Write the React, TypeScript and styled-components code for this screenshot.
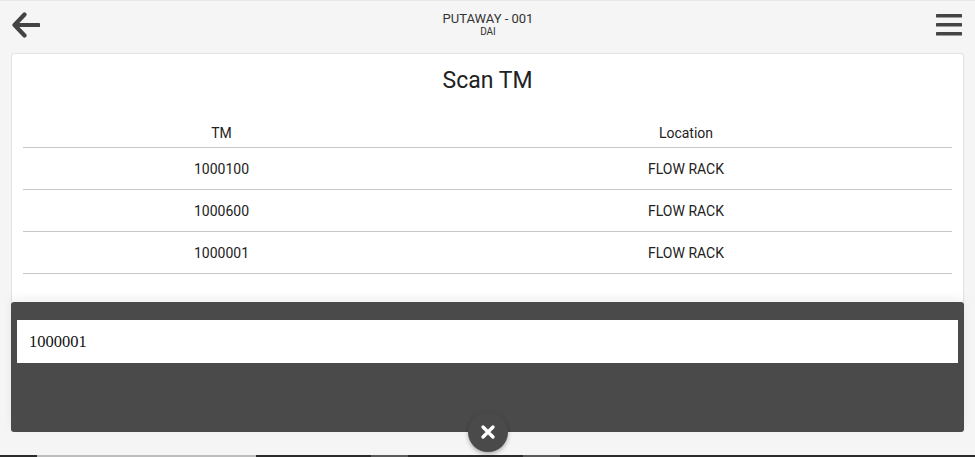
import React from "react";
import styled, { createGlobalStyle } from "styled-components";

const Global = createGlobalStyle`
  html, body { margin: 0; padding: 0; background: #f5f5f5; }
  body { font-family: Roboto, "Liberation Sans", Arial, sans-serif; color: #222; }
  * { box-sizing: border-box; }
`;

const Page = styled.div`
  width: 975px;
  height: 457px;
  display: flex;
  flex-direction: column;
  background: #f5f5f5;
  border-top: 1px solid #e6e6e6;
  overflow: hidden;
`;

const Header = styled.header`
  height: 52px;
  display: flex;
  align-items: flex-start;
  justify-content: space-between;
  padding: 0 13px 0 12px;
`;

const IconButton = styled.button<{ $top: number }>`
  border: none;
  background: transparent;
  padding: 0;
  margin-top: ${(p) => p.$top}px;
  display: flex;
  cursor: pointer;
`;

const TitleBlock = styled.div`
  display: flex;
  flex-direction: column;
  align-items: center;
  padding-top: 10px;
  color: #333;
`;

const Title = styled.div`
  font-size: 13px;
  line-height: 15px;
`;

const Subtitle = styled.div`
  font-size: 10px;
  line-height: 12px;
`;

const Main = styled.div`
  padding: 0 11px;
  display: flex;
  flex-direction: column;
`;

const Card = styled.section`
  height: 249px;
  background: #fff;
  border: 1px solid #e2e2e2;
  border-bottom: none;
  border-radius: 3px 3px 0 0;
  padding: 5px 11px 0;
`;

const CardTitle = styled.h1`
  margin: 0;
  font-size: 23px;
  font-weight: 400;
  line-height: 44px;
  text-align: center;
  color: #222;
`;

const Table = styled.div`
  margin-top: 14px;
  display: grid;
  grid-template-columns: 397px 1fr;
`;

const Cell = styled.div<{ $head?: boolean }>`
  height: ${(p) => (p.$head ? 31 : 42)}px;
  display: flex;
  align-items: center;
  justify-content: center;
  font-size: 14px;
  color: #222;
  border-bottom: 1px solid #c8c8c8;
  padding-top: ${(p) => (p.$head ? 2 : 1)}px;
`;

const Panel = styled.div`
  position: relative;
  height: 130px;
  background: #4a4a4a;
  border-radius: 3px;
  padding: 18px 6px 0;
  box-shadow: 0 -4px 10px rgba(0, 0, 0, 0.06);
`;

const Input = styled.input`
  width: 100%;
  height: 43px;
  border: none;
  outline: none;
  background: #fff;
  padding: 1px 12px 0;
  font-family: "Liberation Serif", "Times New Roman", serif;
  font-size: 16.5px;
  color: #111;
`;

const CloseButton = styled.button`
  position: absolute;
  left: 50%;
  bottom: -20px;
  transform: translateX(-50%);
  width: 40px;
  height: 40px;
  border-radius: 50%;
  border: none;
  background: #4a4a4a;
  box-shadow: 0 2px 4px rgba(0, 0, 0, 0.3);
  display: flex;
  align-items: center;
  justify-content: center;
  padding: 0;
  cursor: pointer;
`;

const Strip = styled.div`
  margin-top: auto;
  height: 2px;
  display: flex;
`;

const StripSeg = styled.div<{ $w: number; $c: string }>`
  width: ${(p) => p.$w}px;
  background: ${(p) => p.$c};
`;

const rows = [
  { tm: "1000100", loc: "FLOW RACK" },
  { tm: "1000600", loc: "FLOW RACK" },
  { tm: "1000001", loc: "FLOW RACK" },
];

const strip = [
  { w: 37, c: "#2a2a2a" },
  { w: 219, c: "#bdbdbd" },
  { w: 115, c: "#2a2a2a" },
  { w: 37, c: "#5a5a5a" },
  { w: 115, c: "#2a2a2a" },
  { w: 37, c: "#5a5a5a" },
  { w: 415, c: "#2a2a2a" },
];

export default function App() {
  return (
    <>
      <Global />
      <Page>
        <Header>
          <IconButton $top={11} aria-label="Back">
            <svg width="28" height="26" viewBox="0 0 28 26">
              <path
                d="M12.5 2.5 L2.5 13 L12.5 23.5 M2.5 13 L26.5 13"
                fill="none"
                stroke="#444"
                strokeWidth="4.2"
                strokeLinecap="round"
                strokeLinejoin="round"
              />
            </svg>
          </IconButton>
          <TitleBlock>
            <Title>PUTAWAY - 001</Title>
            <Subtitle>DAI</Subtitle>
          </TitleBlock>
          <IconButton $top={12} aria-label="Menu">
            <svg width="26" height="23" viewBox="0 0 26 23">
              <rect x="0" y="1" width="26" height="3.6" rx="0.6" fill="#444" />
              <rect x="0" y="10" width="26" height="3.6" rx="0.6" fill="#444" />
              <rect x="0" y="19" width="26" height="3.6" rx="0.6" fill="#444" />
            </svg>
          </IconButton>
        </Header>
        <Main>
          <Card>
            <CardTitle>Scan TM</CardTitle>
            <Table>
              <Cell $head>TM</Cell>
              <Cell $head>Location</Cell>
              {rows.map((r) => (
                <React.Fragment key={r.tm}>
                  <Cell>{r.tm}</Cell>
                  <Cell>{r.loc}</Cell>
                </React.Fragment>
              ))}
            </Table>
          </Card>
          <Panel>
            <Input defaultValue="1000001" />
            <CloseButton aria-label="Close">
              <svg width="16" height="16" viewBox="0 0 16 16">
                <path
                  d="M3 3 L13 13 M13 3 L3 13"
                  stroke="#fff"
                  strokeWidth="3.4"
                  strokeLinecap="round"
                />
              </svg>
            </CloseButton>
          </Panel>
        </Main>
        <Strip>
          {strip.map((s, i) => (
            <StripSeg key={i} $w={s.w} $c={s.c} />
          ))}
        </Strip>
      </Page>
    </>
  );
}
